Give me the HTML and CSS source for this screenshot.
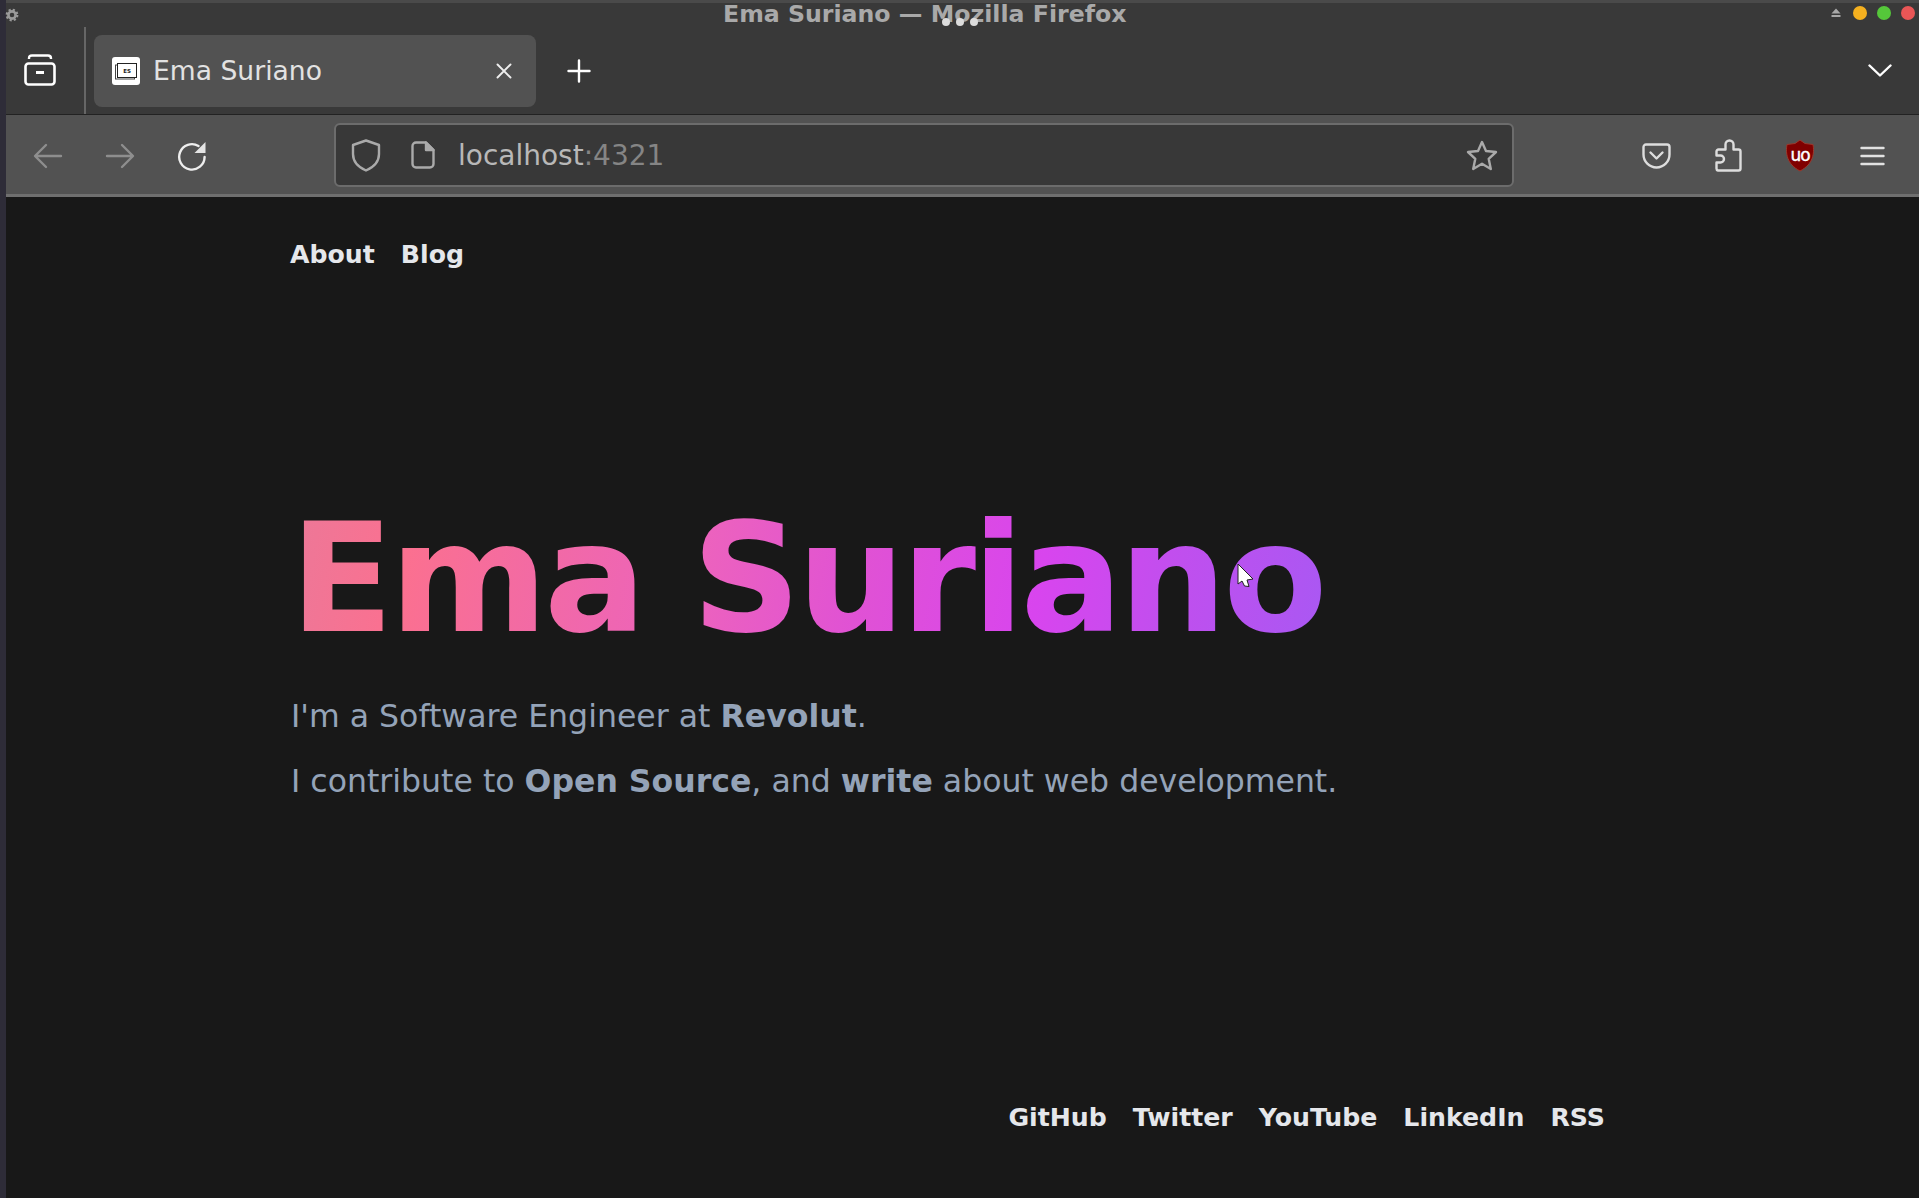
FILE: index.html
```html
<!DOCTYPE html>
<html lang="en">
<head>
<meta charset="utf-8">
<title>Ema Suriano</title>
<link rel="stylesheet" href="styles.css">
</head>
<body>
<div class="strip"></div>
<div class="window">
  <header class="chrome">
    <div class="title-row">
      <svg class="gear" viewBox="0 0 14 14"><circle cx="7" cy="7" r="3.6" fill="none" stroke="#9a9a9a" stroke-width="2.6"/><circle cx="7" cy="7" r="5.2" fill="none" stroke="#9a9a9a" stroke-width="2.4" stroke-dasharray="2.1 2"/></svg>
      <div class="win-title">Ema Suriano — Mozilla Firefox</div>
      <div class="win-controls">
        <svg class="eject" viewBox="0 0 10 10"><path d="M5 0.5 9.5 5.5H.5Z M.5 7H9.5V9H.5Z" fill="#a8a8a8"/></svg>
        <span class="light orange"></span>
        <span class="light green"></span>
        <span class="light red"></span>
      </div>
      <div class="dots"><span></span><span></span><span></span></div>
    </div>
    <div class="tab-row">
      <div class="fxview">
        <svg width="32" height="32" viewBox="0 0 32 32" fill="none" stroke="#fff" stroke-width="2.6"><rect x="1.5" y="9.5" width="29" height="21" rx="3"/><path d="M5 5V4.5Q5 1.5 8 1.5H24Q27 1.5 27 4.5V5" stroke-width="2.4"/><path d="M12 18.5H20" stroke-width="3"/></svg>
      </div>
      <div class="tab">
        <svg class="favicon" viewBox="0 0 28 28"><rect width="28" height="28" rx="3" fill="#fff"/><rect x="3.500" y="8" width="19" height="14" fill="none" stroke="#444" stroke-width="1"/><rect x="5.500" y="6.500" width="19" height="14" fill="#fff" stroke="#222" stroke-width="1"/><text x="15" y="16" font-size="5.5" font-weight="700" text-anchor="middle" fill="#222" font-family="DejaVu Sans">ES</text></svg>
        <span class="tab-label">Ema Suriano</span>
        <svg class="tab-close" viewBox="0 0 16 16" fill="none" stroke="#eee" stroke-width="1.9" stroke-linecap="round"><path d="M1.5 1.5 14.5 14.5M14.5 1.5 1.5 14.5"/></svg>
      </div>
      <svg class="newtab" viewBox="0 0 24 24" fill="none" stroke="#fff" stroke-width="2.4" stroke-linecap="round"><path d="M12 1.5V22.5M1.5 12H22.5"/></svg>
      <svg class="tabs-list" viewBox="0 0 24 13" fill="none" stroke="#fff" stroke-width="2.4" stroke-linecap="round" stroke-linejoin="round"><path d="M1.5 1.5 12 11.5 22.5 1.5"/></svg>
    </div>
    <div class="toolbar">
      <div class="tool"><svg width="30" height="26" viewBox="0 0 30 26" fill="none" stroke="#8e8e8e" stroke-width="2.4" stroke-linecap="round" stroke-linejoin="round"><path d="M13 2 2 13 13 24M2.5 13H28"/></svg></div>
      <div class="tool"><svg width="30" height="26" viewBox="0 0 30 26" fill="none" stroke="#8e8e8e" stroke-width="2.4" stroke-linecap="round" stroke-linejoin="round"><path d="M17 2 28 13 17 24M27.5 13H2"/></svg></div>
      <div class="tool"><svg width="30" height="30" viewBox="0 0 30 30" fill="none"><path d="M21.500 5A12.700 12.700 0 1 0 27.600 16" stroke="#eee" stroke-width="2.4" stroke-linecap="round"/><path d="M28.500 1V12H17.500Z" fill="#e4e4e4"/></svg></div>
      <div class="urlbar">
        <svg class="shield" viewBox="0 0 30 33" fill="none" stroke="#aaa" stroke-width="2.4" stroke-linejoin="round"><path d="M15 1.5 28 6V15C28 23 22 28.5 15 31.5 8 28.5 2 23 2 15V6Z"/></svg>
        <svg class="page" viewBox="0 0 24 28" fill="none" stroke="#aaa" stroke-width="2.4" stroke-linejoin="round"><path d="M5 1.5H15L22.5 9V23A3.5 3.5 0 0 1 19 26.5H5A3.5 3.5 0 0 1 1.5 23V5A3.5 3.5 0 0 1 5 1.5Z"/><path d="M15 1.5 22.5 9H15Z" fill="#aaa"/></svg>
        <span class="url">localhost<span class="url-dim">:4321</span></span>
        <svg class="star" viewBox="0 0 32 31" fill="none" stroke="#aaa" stroke-width="2.4" stroke-linejoin="round"><path d="M16 2 20 11 30 12 22.7 18.8 24.8 29 16 23.8 7.2 29 9.3 18.8 2 12 12 11Z"/></svg>
      </div>
      <div class="tools-right">
        <div class="tool"><svg width="29" height="26" viewBox="0 0 29 26" fill="none" stroke="#ddd" stroke-width="2.4" stroke-linecap="round" stroke-linejoin="round"><path d="M4 1.5H25A2.5 2.5 0 0 1 27.5 4V11.5A13 13 0 0 1 1.5 11.5V4A2.5 2.5 0 0 1 4 1.5Z"/><path d="M8.5 9.5 14.5 15.5 20.5 9.5"/></svg></div>
        <div class="tool"><svg width="27" height="33" viewBox="0 0 27 33" fill="none" stroke="#ddd" stroke-width="2.4" stroke-linejoin="round"><path d="M3 31.5H23.5A2 2 0 0 0 25.5 29.5V12.5A2 2 0 0 0 23.5 10.5H18.5V5.5A4 4 0 0 0 10.500 5.500V10.500H3.500A2 2 0 0 0 1.500 12.500V16.500H5.500A3.500 3.500 0 0 1 5.500 23.500H1.500V29.500A2 2 0 0 0 3 31.500Z"/></svg></div>
        <div class="tool">
          <svg width="30" height="33" viewBox="0 0 30 33"><path d="M15 1 20 4.500 28 5.500C29.500 14 28.500 25 15 32 1.500 25 .5 14 2 5.500L10 4.500Z" fill="#800000" stroke="#9b3a2e" stroke-width="1"/><text x="15" y="21.500" font-size="17" letter-spacing="-1" text-anchor="middle" fill="#fff" stroke="#fff" stroke-width=".4" font-family="DejaVu Sans">uo</text></svg>
        </div>
        <div class="tool"><svg width="25" height="20" viewBox="0 0 25 20" fill="none" stroke="#e2e2e2" stroke-width="2.4" stroke-linecap="round"><path d="M1.500 2H23.500M1.500 10H23.500M1.500 18H23.500"/></svg></div>
      </div>
    </div>
  </header>
  <div class="page-body">
    <nav class="top-nav"><a>About</a><a>Blog</a></nav>
    <main class="hero">
      <h1>Ema Suriano</h1>
      <p>I'm a Software Engineer at <b>Revolut</b>.</p>
      <p>I contribute to <b>Open Source</b>, and <b>write</b> about web development.</p>
    </main>
    <footer class="foot-nav"><a>GitHub</a><a>Twitter</a><a>YouTube</a><a>LinkedIn</a><a>RSS</a></footer>
    <svg class="cursor" width="17" height="25" viewBox="0 0 17 25"><path d="M1 1 16 16 10 17 12 23.500 7.500 23 5 18 1 21Z" fill="#fff" stroke="#222" stroke-width="1"/></svg>
  </div>
</div>
</body>
</html>
```
FILE: styles.css
```css
* { box-sizing: border-box; }
html, body { margin: 0; height: 100%; overflow: hidden; }
body {
  display: flex;
  background: #181818;
  font-family: "DejaVu Sans", sans-serif;
}
.strip { width: 6px; background: #2e2c38; flex: none; }
.window { flex: 1; display: flex; flex-direction: column; min-width: 0; }

.chrome { flex: none; background: #393939; }
.title-row {
  position: relative;
  height: 27px;
  border-top: 3px solid #4a4a4a;
  display: flex;
  align-items: center;
  padding-right: 4px;
}
.gear { width: 14px; height: 14px; margin-left: -1px; flex: none; }
.win-title {
  margin-left: 704px;
  font-size: 23.65px;
  font-weight: 700;
  color: #a9a9a9;
  white-space: nowrap;
  line-height: 24px;
  margin-top: -3px;
}
.win-controls { margin-left: auto; display: flex; align-items: center; gap: 10px; margin-top: -4px; }
.eject { width: 10px; height: 10px; margin-right: 2px; }
.light { width: 14px; height: 14px; border-radius: 50%; }
.orange { background: #f4b01f; }
.green { background: #55c73a; }
.red { background: #e95656; }
.dots {
  position: absolute;
  left: 936px;
  top: 15px;
  display: flex;
  gap: 6px;
}
.dots span { width: 8px; height: 8px; border-radius: 50%; background: #dcdcdc; }

.tab-row {
  height: 88px;
  display: flex;
  align-items: center;
  border-bottom: 1px solid #222;
  padding-right: 27px;
}
.fxview {
  width: 80px;
  height: 100%;
  border-right: 2px solid #666;
  display: flex;
  align-items: center;
  justify-content: center;
  padding-bottom: 2px;
  flex: none;
}
.fxview svg { margin-right: 10px; }
.tab {
  margin-left: 8px;
  width: 442px;
  height: 72px;
  background: #525252;
  border-radius: 8px;
  display: flex;
  align-items: center;
  padding-left: 18px;
  padding-right: 24px;
  flex: none;
}
.favicon { width: 28px; height: 28px; flex: none; }
.tab-label { margin-left: 13px; font-size: 26.6px; color: #e2e2e2; white-space: nowrap; }
.tab-close { margin-left: auto; width: 16px; height: 16px; }
.newtab { margin-left: 31px; width: 24px; height: 24px; }
.tabs-list { margin-left: auto; width: 24px; height: 13px; }

.toolbar {
  height: 82px;
  background: #525252;
  border-bottom: 3px solid #6f6f6f;
  display: flex;
  align-items: center;
  padding: 2px 11px 0 6px;
}
.tool { width: 72px; height: 60px; display: flex; align-items: center; justify-content: center; flex: none; }
.urlbar {
  margin-left: 106px;
  width: 1180px;
  height: 64px;
  margin-top: -1px;
  background: #383838;
  border: 2px solid #6c6c6c;
  border-radius: 6px;
  display: flex;
  align-items: center;
  padding-left: 15px;
  padding-right: 14px;
  flex: none;
}
.shield { width: 30px; height: 33px; flex: none; }
.page { width: 24px; height: 28px; margin-left: 30px; flex: none; }
.url { margin-left: 23px; font-size: 28px; color: #b8b8b8; white-space: nowrap; }
.url-dim { color: #858585; }
.star { margin-left: auto; width: 32px; height: 31px; flex: none; }
.tools-right { margin-left: auto; display: flex; align-items: center; }

.page-body {
  position: relative;
  flex: 1;
  display: flex;
  flex-direction: column;
  padding: 0 284px;
  background: #181818;
}
.top-nav { display: flex; gap: 26px; margin-top: 41px; height: 34px; align-items: center; }
.top-nav a, .foot-nav a { font-size: 25.2px; font-weight: 700; color: #e5e7eb; line-height: 34px; }
.hero { margin-top: 230px; }
.hero h1 {
  display: inline-block;
  margin: 0;
  font-size: 151.7px;
  line-height: 154px;
  font-weight: 700;
  letter-spacing: -0.025em;
  color: transparent;
  background: linear-gradient(100deg, #ec7898 0%, #fb7090 12%, #f26aa5 25%, #ec62be 40%, #e052d4 55%, #d845ee 72%, #c04fee 85%, #a958f3 100%);
  -webkit-background-clip: text;
  background-clip: text;
}
.hero p { margin: 0; padding-left: 1px; font-size: 31.55px; line-height: 65px; color: #94a3b8; }
.hero h1 + p { margin-top: 28px; }
.foot-nav {
  margin-top: auto;
  margin-bottom: 63px;
  display: flex;
  justify-content: flex-end;
  gap: 26px;
  padding-right: 30px;
}
.cursor { position: absolute; left: 1231px; top: 366px; }
```
